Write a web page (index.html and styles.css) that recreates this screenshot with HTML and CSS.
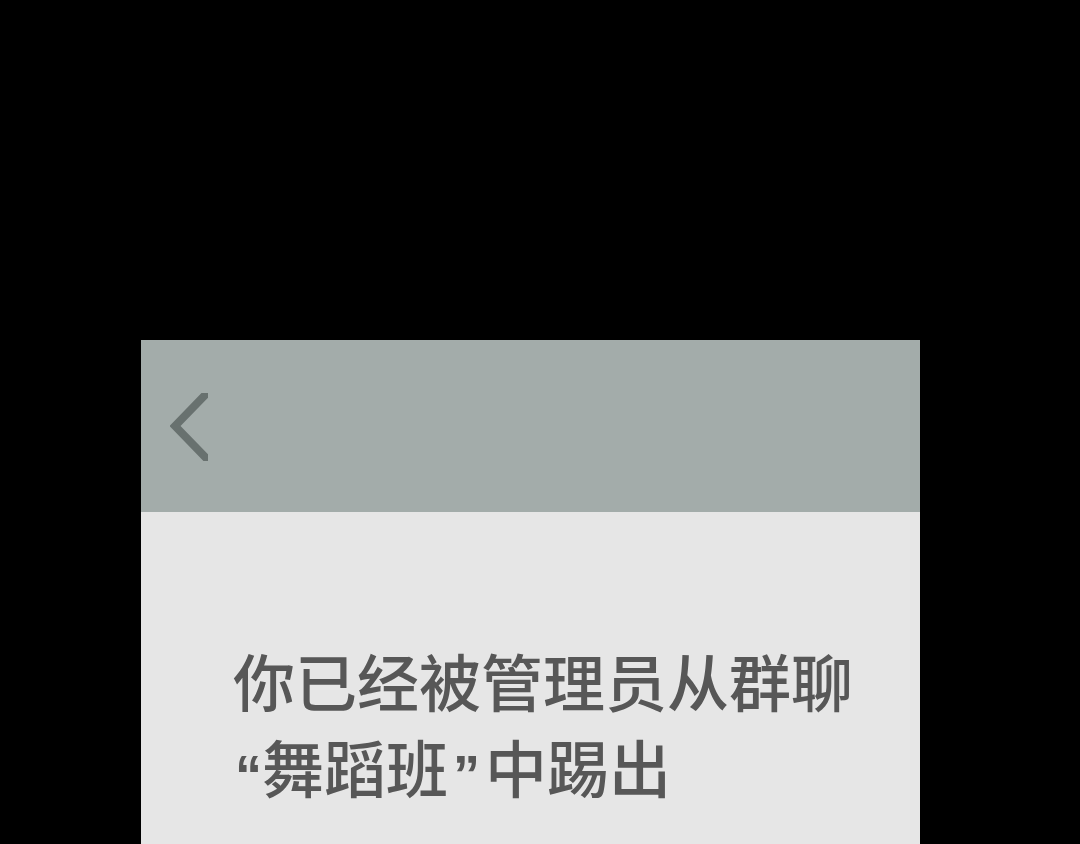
FILE: index.html
```html
<!DOCTYPE html>
<html lang="zh-CN">
<head>
    <meta charset="UTF-8">
    <meta name="viewport" content="width=device-width, initial-scale=1.0">
    <title>群聊</title>
    <link rel="stylesheet" href="styles.css">
</head>
<body>
    <div class="screen">
        <div class="phone">
            <div class="nav-bar">
                <span class="back-btn">
                    <svg width="38" height="68" viewBox="0 0 38 68">
                        <polyline points="39,-2 5,33 39,68" fill="none" stroke="#68716f" stroke-width="8"/>
                    </svg>
                </span>
            </div>
            <div class="content">
                <p class="notice">你已经被管理员从群聊<br><span class="quote-open">“</span>舞蹈班<span class="quote-close">”</span>中踢出</p>
            </div>
        </div>
    </div>
</body>
</html>
```

FILE: styles.css
```css
body {
    margin: 0;
    padding: 0;
    background-color: #000000;
}

.screen {
    height: 844px;
    overflow: hidden;
    padding-top: 340px;
    padding-left: 141px;
    box-sizing: border-box;
}

.phone {
    width: 779px;
    height: 504px;
    background: #e6e6e6;
}

.nav-bar {
    height: 172px;
    background: #a3acaa;
    display: flex;
    align-items: flex-start;
    padding-left: 29px;
    box-sizing: border-box;
}

.back-btn {
    display: block;
    margin-top: 53px;
}

.back-btn svg {
    display: block;
}

.content {
    padding: 128px 0 0 92px;
}

.notice {
    margin: 0;
    font-family: "Noto Sans", "Noto Sans CJK SC", sans-serif;
    font-size: 62px;
    font-weight: 500;
    line-height: 86px;
    color: #575757;
}

.quote-open,
.quote-close {
    font-family: "Liberation Sans", sans-serif;
    font-size: 54px;
    font-weight: 700;
}

.quote-open {
    padding-left: 2px;
}

.quote-close {
    padding-left: 5px;
    padding-right: 5px;
}
```
